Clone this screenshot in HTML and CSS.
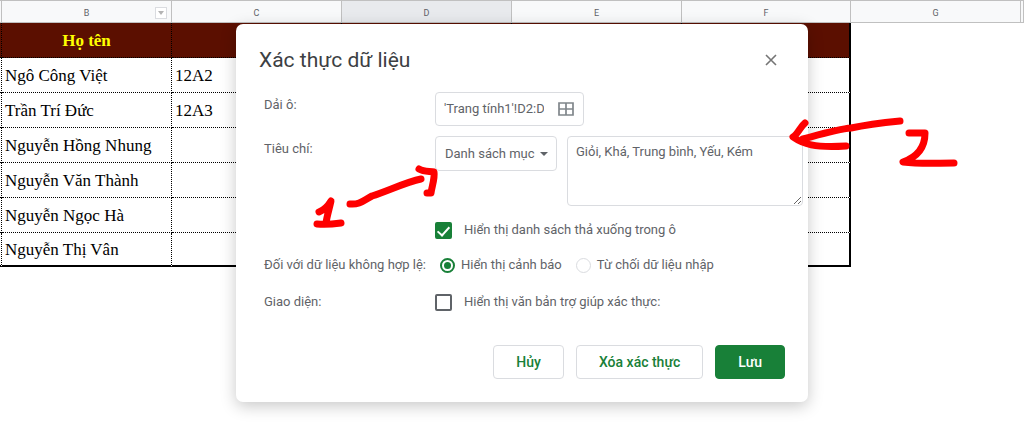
FILE: index.html
```html
<!DOCTYPE html>
<html lang="vi">
<head>
<meta charset="utf-8">
<title>Xác thực dữ liệu</title>
<meta name="viewport" content="width=device-width, initial-scale=1">
<link rel="stylesheet" href="styles.css">
</head>
<body>
<main class="sheet">
  <table class="grid">
    <colgroup>
      <col class="col-edge"><col class="col"><col class="col"><col class="col"><col class="col"><col class="col-last"><col class="col"><col>
    </colgroup>
    <thead>
      <tr class="letters">
        <th></th>
        <th><div class="letter">B<button class="filter" type="button" aria-label="Menu cột B"><svg viewBox="0 0 10 10" width="10" height="10"><path d="M2 3h6L5 7z" fill="#b4b4b4"/></svg></button></div></th>
        <th>C</th><th class="active">D</th><th>E</th><th>F</th><th>G</th><th></th>
      </tr>
    </thead>
    <tbody>
      <tr class="heading"><td></td><td>Họ tên</td><td></td><td></td><td></td><td></td><td></td><td></td></tr>
      <tr><td></td><td>Ngô Công Việt</td><td>12A2</td><td></td><td></td><td></td><td></td><td></td></tr>
      <tr><td></td><td>Trần Trí Đức</td><td>12A3</td><td></td><td></td><td></td><td></td><td></td></tr>
      <tr><td></td><td>Nguyễn Hồng Nhung</td><td></td><td></td><td></td><td></td><td></td><td></td></tr>
      <tr><td></td><td>Nguyễn Văn Thành</td><td></td><td></td><td></td><td></td><td></td><td></td></tr>
      <tr><td></td><td>Nguyễn Ngọc Hà</td><td></td><td></td><td></td><td></td><td></td><td></td></tr>
      <tr class="end"><td></td><td>Nguyễn Thị Vân</td><td></td><td></td><td></td><td></td><td></td><td></td></tr>
    </tbody>
  </table>
</main>

<form class="dialog" role="dialog" aria-labelledby="title">
  <header class="dialog-head">
    <h1 id="title">Xác thực dữ liệu</h1>
    <button class="close" type="button" aria-label="Đóng"><svg viewBox="0 0 12 12" width="12" height="12"><path d="M1 1l10 10M11 1L1 11" stroke="#757575" stroke-width="1.6"/></svg></button>
  </header>
  <div class="row">
    <label class="name" for="range">Dải ô:</label>
    <div class="range">
      <input id="range" type="text" value="'Trang tính1'!D2:D7">
      <button type="button" aria-label="Chọn dải ô"><svg viewBox="0 0 16 14" width="16" height="14"><path d="M1 1h14v12H1zM8 1v12M1 7h14" fill="none" stroke="#80868b" stroke-width="1.7"/></svg></button>
    </div>
  </div>
  <div class="row">
    <label class="name" for="criteria">Tiêu chí:</label>
    <div class="criteria">
      <div class="select">
        <select id="criteria"><option>Danh sách mục</option></select>
        <svg viewBox="0 0 8 4" width="8" height="4"><path d="M0 0h8L4 4z" fill="#5f6368"/></svg>
      </div>
      <textarea aria-label="Danh sách mục">Giỏi, Khá, Trung bình, Yếu, Kém</textarea>
    </div>
  </div>
  <div class="row option first">
    <span class="name"></span>
    <label class="choice"><input class="check" type="checkbox" checked>Hiển thị danh sách thả xuống trong ô</label>
  </div>
  <div class="row option">
    <span class="name">Đối với dữ liệu không hợp lệ:</span>
    <div class="radios">
      <label><input class="radio" type="radio" name="invalid" checked>Hiển thị cảnh báo</label>
      <label><input class="radio" type="radio" name="invalid">Từ chối dữ liệu nhập</label>
    </div>
  </div>
  <div class="row option">
    <span class="name">Giao diện:</span>
    <label class="choice"><input class="check" type="checkbox">Hiển thị văn bản trợ giúp xác thực:</label>
  </div>
  <footer class="actions">
    <button type="button">Hủy</button>
    <button type="button">Xóa xác thực</button>
    <button class="primary" type="submit">Lưu</button>
  </footer>
</form>

<svg class="marks" viewBox="0 0 1024 429" width="1024" height="429" role="img" aria-label="Bước 1 và bước 2">
  <g fill="none" stroke="#fe0000" stroke-width="7" stroke-linecap="round" stroke-linejoin="round">
    <path d="M350 204C360 205 364 200 372 196C388 191 406 182 421 179"/>
    <path d="M419 169C424 172 430 171 434 172C435 178 432 186 431 193H427"/>
    <path d="M319 212C324 210 328 206 331 201C329 210 327 216 326 223M317 224C326 225 334 224 341 223"/>
    <path d="M900 121C880 123 865 125 851 128C838 129 818 135 803 139"/>
    <path d="M805 123C800 127 798 134 793 137C803 144 814 148 846 146"/>
    <path d="M909 133H925C925 145 920 156 903 162C920 164 935 163 954 163"/>
  </g>
</svg>
</body>
</html>
```

FILE: styles.css
```css
* { box-sizing: border-box; }

body {
  margin: 0;
  min-height: 100vh;
  overflow: hidden;
  position: relative;
  background: #fff;
  color: #5f6368;
  font: 13px/20px Roboto, sans-serif;
}

button, input, select, textarea { font: inherit; color: inherit; }

/* Spreadsheet */
.grid {
  width: 100%;
  table-layout: fixed;
  border-collapse: separate;
  border-spacing: 0;
}
.col-edge { width: 2px; }
.col { width: 170px; }
.col-last { width: 169px; }

.letters th {
  height: 23px;
  padding: 2px 0 0;
  border-top: 1px solid #c0c0c0;
  border-right: 1px solid #c0c0c0;
  border-bottom: 1px solid #c0c0c0;
  background: #f8f9fa;
  color: #5f6368;
  font-size: 9px;
  font-weight: 400;
  line-height: 18px;
}
.letters .active { background: #e8eaed; }
.letter {
  display: grid;
  grid-template-columns: 1fr auto 1fr;
  align-items: center;
}
.letter::before { content: ""; }
.filter {
  justify-self: end;
  display: flex;
  margin-right: 4px;
  padding: 0;
  border: 1px solid #dadce0;
  background: #fff;
}

.grid td {
  height: 35px;
  padding: 2px 3px 0;
  border-right: 1px dotted #000;
  border-bottom: 1px dotted #000;
  color: #000;
  font: 17px/20px "Liberation Serif", serif;
  white-space: nowrap;
}
.grid td:first-child { padding: 0; }
.grid tr td:nth-child(6) { border-right: 2px solid #000; }
.grid tr td:nth-child(n+7) { border: 0; }
.grid .heading td:nth-child(-n+6) { background: #5b0f00; }
.grid .heading td { color: #ff0; font-weight: 700; text-align: center; }
.grid .end td { height: 34px; border-bottom: 2px solid #000; }
.grid .end td:nth-child(n+7) { border: 0; }

/* Dialog */
.dialog {
  position: absolute;
  top: 24px;
  left: 236px;
  width: 572px;
  max-width: 100%;
  padding: 20px 23px 23px;
  border-radius: 7px;
  background: #fff;
  box-shadow: 0 4px 16px rgba(0, 0, 0, .22);
}
.dialog-head {
  display: flex;
  justify-content: space-between;
  align-items: center;
  height: 32px;
  margin-bottom: 16px;
}
h1 {
  margin: 0;
  color: #3c4043;
  font: 400 21px/32px Roboto, sans-serif;
}
.close {
  display: flex;
  margin-right: 8px;
  padding: 0;
  border: 0;
  background: none;
}
.row {
  display: flex;
  align-items: flex-start;
  margin: 0 0 10px 5px;
}
.name {
  flex: none;
  width: 171px;
  padding-top: 3px;
  white-space: nowrap;
}
.range, .select, textarea {
  border: 1px solid #dadce0;
  border-radius: 4px;
  background: #fff;
}
.range {
  display: flex;
  align-items: center;
  gap: 14px;
  width: 149px;
  height: 34px;
  padding: 0 9px 0 8px;
}
.range input {
  flex: 1;
  min-width: 0;
  padding: 0;
  border: 0;
  outline: 0;
  background: none;
}
.range button { display: flex; padding: 0; border: 0; background: none; }
.criteria { display: flex; flex: 1; align-items: flex-start; gap: 10px; }
.select {
  display: flex;
  align-items: center;
  width: 122px;
  height: 35px;
  padding: 0 8px 0 9px;
}
select {
  flex: 1;
  min-width: 0;
  padding: 0;
  border: 0;
  appearance: none;
  background: none;
}
textarea {
  display: block;
  flex: 1;
  height: 70px;
  padding: 5px 8px;
  margin-right: -18px;
  resize: both;
}
.option { align-items: center; height: 20px; margin-bottom: 15px; }
.option .name { padding: 0; }
.option.first { margin-top: 14px; }
.option + .option + .option { margin-top: 17px; }
.choice, .radios label { display: flex; align-items: center; white-space: nowrap; }
.choice { gap: 12px; }
.radios { display: flex; gap: 14px; padding-left: 5px; }
.radios label { gap: 6px; }
.check, .radio {
  display: grid;
  place-items: center;
  appearance: none;
  margin: 0;
}
.check { width: 17px; height: 17px; border: 2px solid #5f6368; border-radius: 2px; }
.check:checked { border-color: #188038; background: #188038; }
.check:checked::after {
  content: "";
  width: 5px;
  height: 10px;
  margin-bottom: 2px;
  border: solid #fff;
  border-width: 0 2px 2px 0;
  transform: rotate(42deg);
}
.radio { width: 15px; height: 15px; border: 1px solid #dadce0; border-radius: 50%; }
.radio:checked { border: 2px solid #188038; }
.radio:checked::after { content: ""; width: 7px; height: 7px; border-radius: 50%; background: #188038; }
.actions { display: flex; justify-content: flex-end; gap: 12px; margin-top: 33px; }
.actions button {
  height: 34px;
  padding: 0 22px;
  border: 1px solid #dadce0;
  border-radius: 4px;
  background: #fff;
  color: #188038;
  font-size: 14px;
  font-weight: 500;
}
.actions .primary { border-color: #188038; background: #188038; color: #fff; }

/* Hand-drawn marks over the page */
.marks { position: absolute; top: 0; left: 0; pointer-events: none; }
```
